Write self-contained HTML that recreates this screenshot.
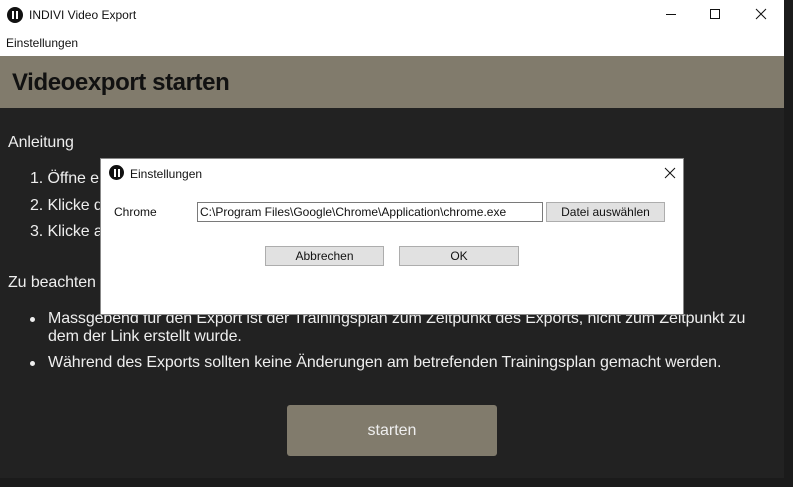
<!DOCTYPE html>
<html><head><meta charset="utf-8"><style>
*{margin:0;padding:0;box-sizing:border-box}
body{width:793px;height:487px;background:#1b1b1b;font-family:"Liberation Sans",sans-serif;position:relative;overflow:hidden}
.win{position:absolute;left:0;top:0;width:784px;height:478px;background:#222}
.tb{position:absolute;left:0;top:0;width:784px;height:31px;background:#fff}
.menu{position:absolute;left:0;top:31px;width:784px;height:25px;background:#fff;font-size:12px;color:#111;padding:5px 0 0 6px}
.hdr{position:absolute;left:0;top:56px;width:784px;height:52px;background:#817b6c}
.hdr h1{position:absolute;left:12px;top:13px;font-size:24px;font-weight:bold;color:#111;letter-spacing:-0.4px}
.t{position:absolute;color:#eee;font-size:16px;white-space:nowrap;letter-spacing:-0.1px}
.dot{position:absolute;width:5px;height:5px;border-radius:50%;background:#eee}
.btn{position:absolute;left:287px;top:405px;width:210px;height:51px;background:#817b6c;border-radius:3px;color:#eee;font-size:16px;text-align:center;line-height:51px}
.dlg{position:absolute;left:100px;top:158px;width:584px;height:157px;background:#fff;border:1px solid #888}
.dlg .s{position:absolute;font-size:12px;color:#111;white-space:nowrap}
.inp{position:absolute;left:96px;top:43px;width:346px;height:20px;border:1px solid #7a7a7a;background:#fff}
.b{position:absolute;height:20px;border:1px solid #adadad;background:#e1e1e1;font-size:12px;text-align:center;line-height:18px;color:#111}
.logo{position:absolute;width:16px;height:16px;border-radius:50%;background:#111}
.logo:before,.logo:after{content:"";position:absolute;top:4px;width:2px;height:8px;background:#fff}
.logo:before{left:5px}.logo:after{left:9px}
</style></head><body>
<div class="win">
<div class="tb">
<div class="logo" style="left:7px;top:7px"></div>
<div style="position:absolute;left:29px;top:8px;font-size:12px;color:#111">INDIVI Video Export</div>
<div style="position:absolute;left:666px;top:14px;width:10px;height:1px;background:#111"></div>
<div style="position:absolute;left:710px;top:9px;width:10px;height:10px;border:1px solid #111"></div>
<svg style="position:absolute;left:755px;top:8px" width="12" height="12"><path d="M1 1L11 11M11 1L1 11" stroke="#111" stroke-width="1"/></svg>
</div>
<div class="menu">Einstellungen</div>
<div class="hdr"><h1>Videoexport starten</h1></div>
<div class="t" style="left:8px;top:134px">Anleitung</div>
<div class="t" style="left:30px;top:170px">1. Öffne e</div>
<div class="t" style="left:30px;top:197px">2. Klicke d</div>
<div class="t" style="left:30px;top:223px">3. Klicke a</div>
<div class="t" style="left:8px;top:274px">Zu beachten</div>
<div class="dot" style="left:30px;top:317px"></div>
<div class="t" style="left:48px;top:310px">Massgebend für den Export ist der Trainingsplan zum Zeitpunkt des Exports, nicht zum Zeitpunkt zu</div>
<div class="t" style="left:48px;top:328px">dem der Link erstellt wurde.</div>
<div class="dot" style="left:30px;top:361px"></div>
<div class="t" style="left:48px;top:354px">Während des Exports sollten keine Änderungen am betrefenden Trainingsplan gemacht werden.</div>
<div class="btn">starten</div>
</div>
<div class="dlg">
<div class="logo" style="left:8px;top:6px;width:15px;height:15px"></div>
<div class="s" style="left:29px;top:8px">Einstellungen</div>
<svg style="position:absolute;left:563px;top:8px" width="12" height="12"><path d="M1 1L11 11M11 1L1 11" stroke="#111" stroke-width="1"/></svg>
<div class="s" style="left:13px;top:46px">Chrome</div>
<div class="inp"></div>
<div class="s" style="left:99px;top:46px">C:\Program Files\Google\Chrome\Application\chrome.exe</div>
<div class="b" style="left:445px;top:43px;width:119px">Datei auswählen</div>
<div class="b" style="left:164px;top:87px;width:119px">Abbrechen</div>
<div class="b" style="left:298px;top:87px;width:120px">OK</div>
</div>
</body></html>
